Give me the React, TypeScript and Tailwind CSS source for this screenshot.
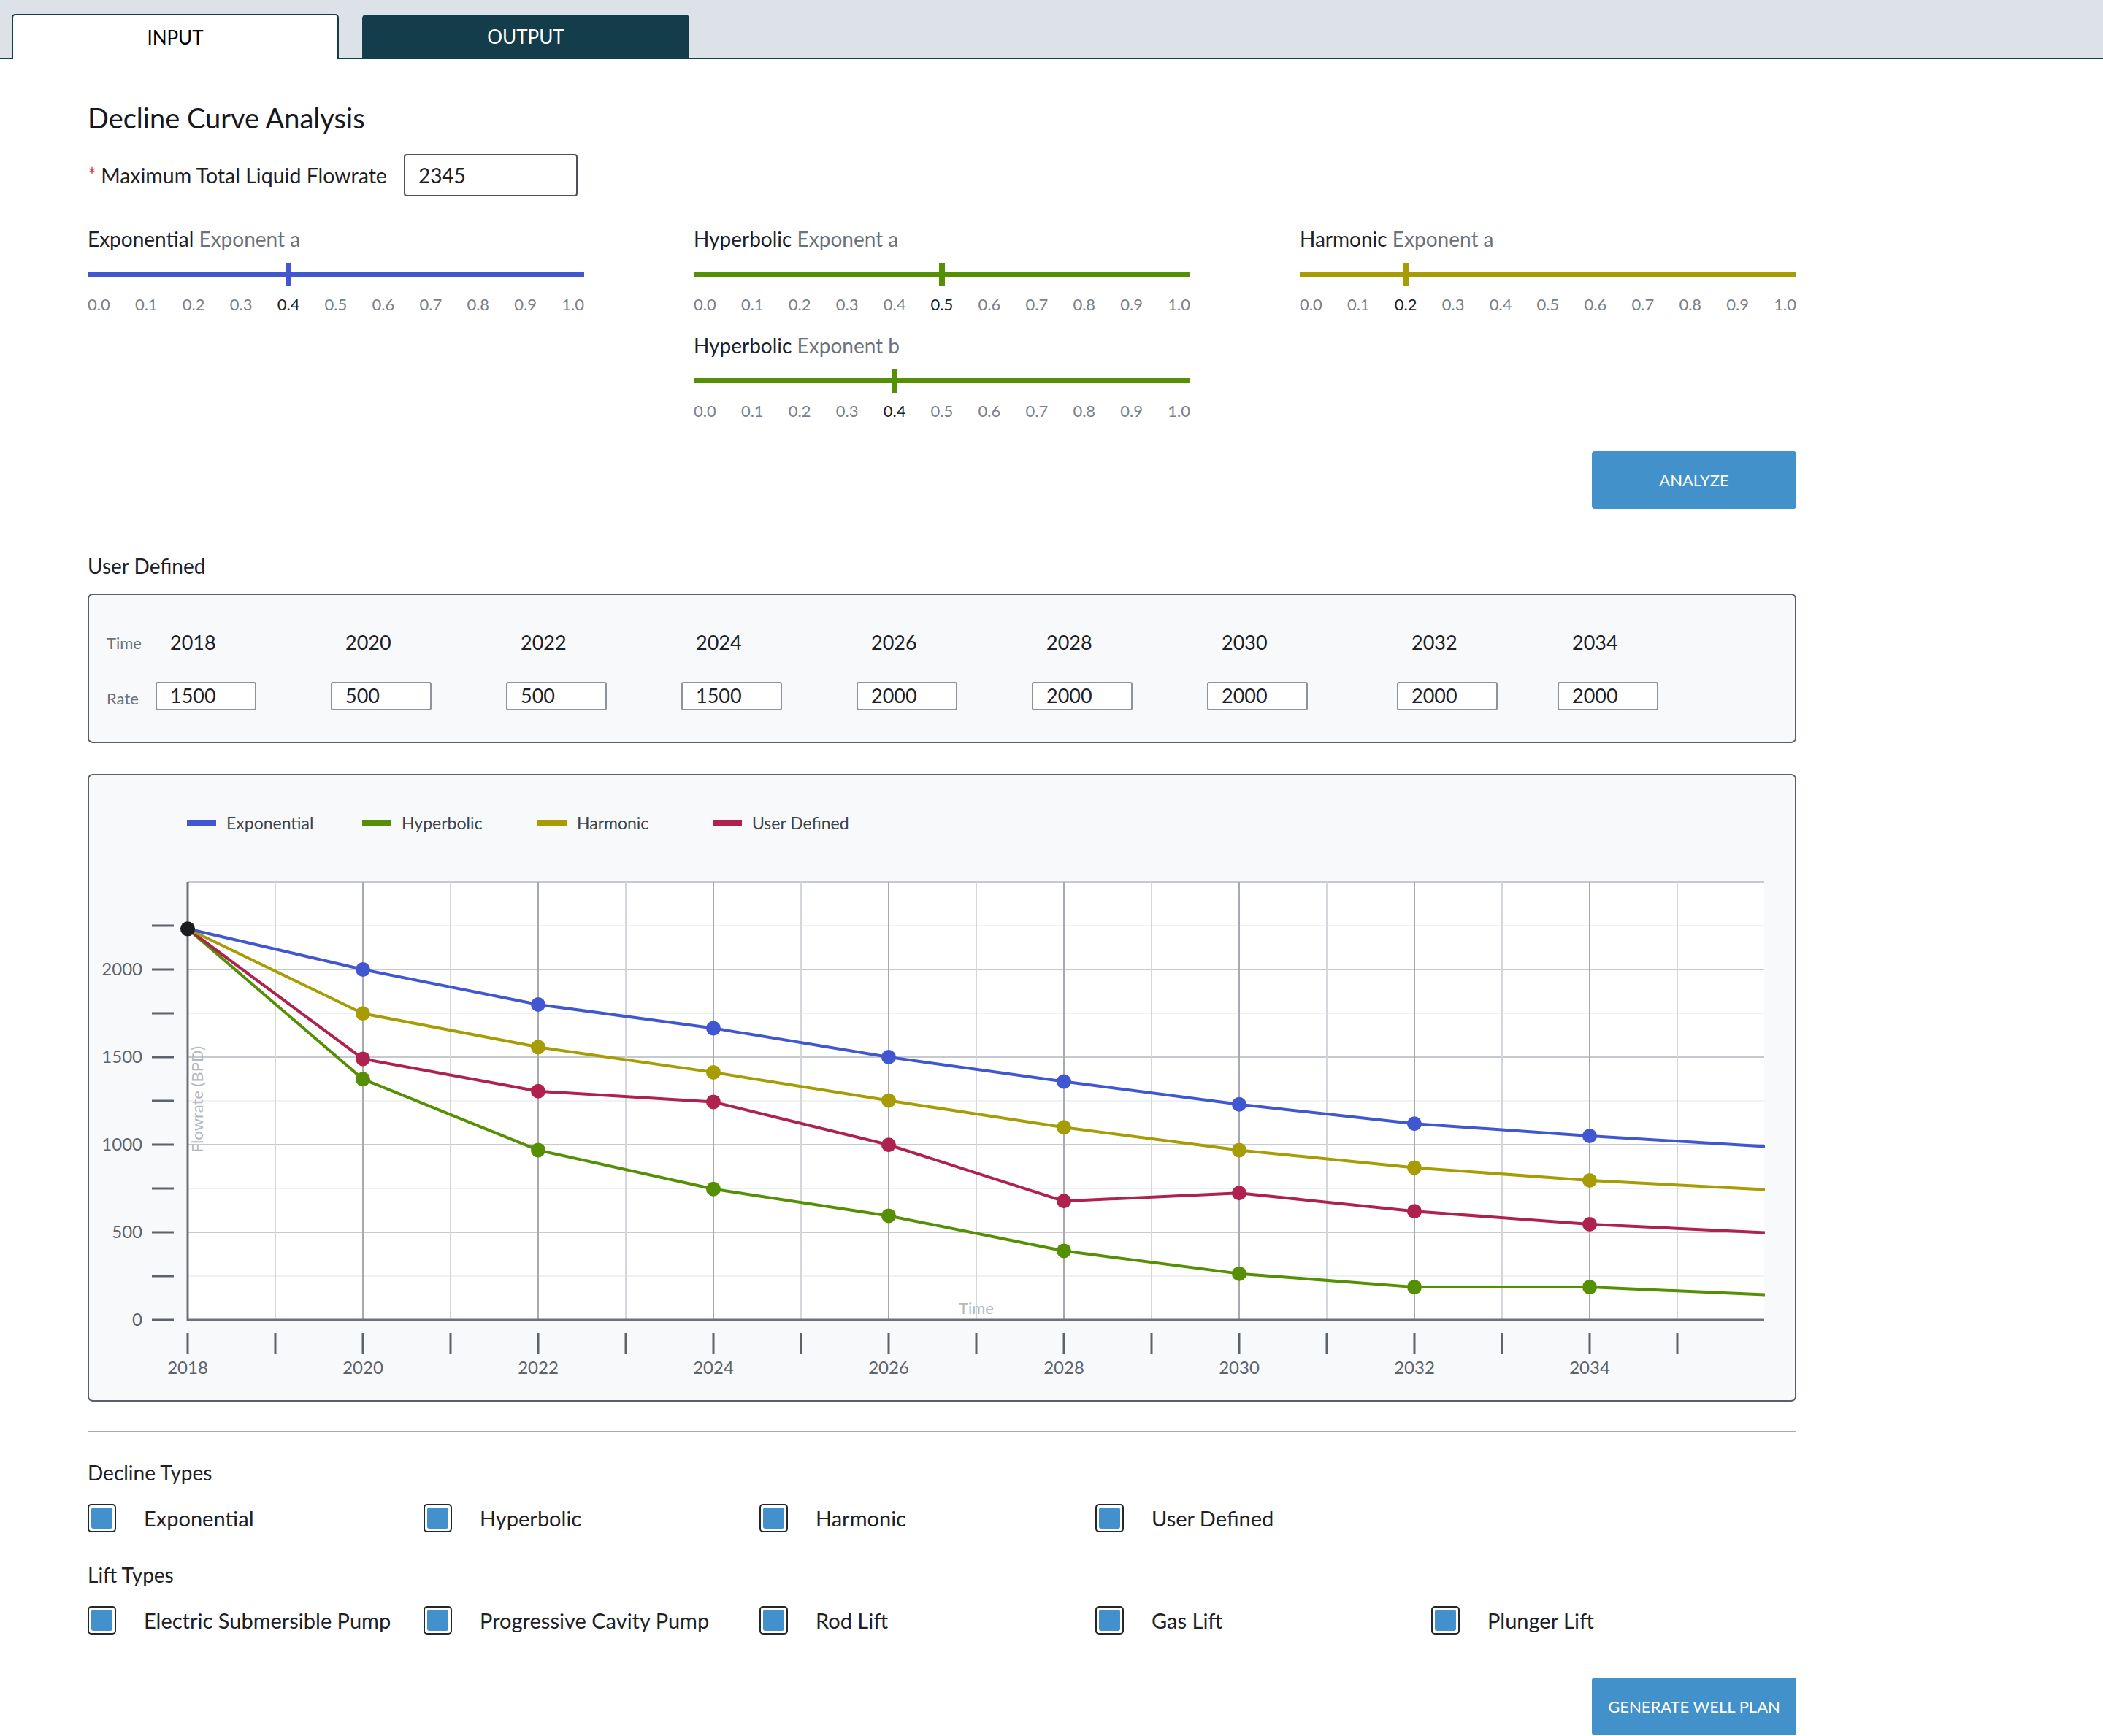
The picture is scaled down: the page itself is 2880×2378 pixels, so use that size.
import React from 'react';

const TICKS = ['0.0', '0.1', '0.2', '0.3', '0.4', '0.5', '0.6', '0.7', '0.8', '0.9', '1.0'];

type SliderProps = {
  name: string;
  param: string;
  value: number;
  barClass: string;
};

const Slider: React.FC<SliderProps> = ({ name, param, value, barClass }) => {
  const active = Math.round(value * 10);
  return (
    <div className="w-[680px]">
      <div className="text-[28px] leading-[34px] text-[#1d2025]">
        {name} <span className="text-[#6b717a]">{param}</span>
      </div>
      <div className="relative mt-[16px] h-[32px] pt-[12px]">
        <div className={`h-[7px] ${barClass}`} />
        <div
          className={`absolute top-0 h-[32px] w-[8px] ${barClass}`}
          style={{ left: 15.5 + value * 649 - 4 }}
        />
      </div>
      <div className="mt-[12px] flex justify-between text-[22px] leading-[26px]">
        {TICKS.map((t, i) => (
          <span key={t} className={i === active ? 'text-[#1d2025]' : 'text-[#7a8089]'}>
            {t}
          </span>
        ))}
      </div>
    </div>
  );
};

const Checkbox: React.FC<{ label: string }> = ({ label }) => (
  <div className="flex w-[460px] items-center">
    <div className="h-[39px] w-[39px] rounded-[5px] border-2 border-[#23272c] bg-white p-[3px]">
      <div className="h-full w-full rounded-[3px] bg-[#4291cc]" />
    </div>
    <span className="ml-[38px] text-[29px] leading-[34px] text-[#1d2025]">{label}</span>
  </div>
);

// chart geometry (svg coords)
const PLOT_L = 135;
const PLOT_R = 2294;
const PLOT_T = 66;
const PLOT_B = 666;
const px = (year: number) => PLOT_L + (year - 2018) * 120;
const py = (v: number) => PLOT_B - v * 0.24;

const START = 2232;
const YEARS = [2020, 2022, 2024, 2026, 2028, 2030, 2032, 2034, 2036];

const SERIES = [
  { key: 'hyp', color: '#558f04', data: [1374, 969, 747, 594, 394, 264, 187, 187, 144] },
  { key: 'usr', color: '#b0224e', data: [1490, 1305, 1244, 999, 678, 724, 620, 546, 498] },
  { key: 'har', color: '#a89c05', data: [1749, 1557, 1413, 1252, 1099, 969, 869, 796, 744] },
  { key: 'exp', color: '#4157d2', data: [2000, 1800, 1665, 1500, 1360, 1230, 1120, 1050, 990] },
];

const LEGEND = [
  { label: 'Exponential', swatch: 'bg-[#4157d2]' },
  { label: 'Hyperbolic', swatch: 'bg-[#558f04]' },
  { label: 'Harmonic', swatch: 'bg-[#a89c05]' },
  { label: 'User Defined', swatch: 'bg-[#b0224e]' },
];

const Chart: React.FC = () => {
  const hVals = [250, 500, 750, 1000, 1250, 1500, 1750, 2000, 2250, 2500];
  const vYears = Array.from({ length: 17 }, (_, i) => 2019 + i);
  const tickYears = Array.from({ length: 18 }, (_, i) => 2018 + i);
  const yTicks = Array.from({ length: 10 }, (_, i) => i * 250);

  return (
    <svg width={2336} height={776} className="block">
      <rect x={PLOT_L} y={PLOT_T} width={PLOT_R - PLOT_L} height={PLOT_B - PLOT_T} fill="#ffffff" />
      {hVals.map((v) => (
        <line
          key={v}
          x1={PLOT_L}
          x2={PLOT_R}
          y1={py(v)}
          y2={py(v)}
          stroke={v % 500 === 0 ? '#c6c9ce' : '#f0f1f3'}
          strokeWidth={2}
        />
      ))}
      {vYears.map((y) => (
        <line
          key={y}
          x1={px(y)}
          x2={px(y)}
          y1={PLOT_T}
          y2={PLOT_B}
          stroke={y % 2 === 0 ? '#a7abb1' : '#d3d6da'}
          strokeWidth={2}
        />
      ))}
      <line x1={PLOT_L} x2={PLOT_L} y1={PLOT_T} y2={PLOT_B + 1} stroke="#6d727a" strokeWidth={3} />
      <line x1={PLOT_L} x2={PLOT_R} y1={PLOT_B} y2={PLOT_B} stroke="#6d727a" strokeWidth={3} />

      {yTicks.map((v) => (
        <line key={v} x1={86} x2={116} y1={py(v)} y2={py(v)} stroke="#5d636b" strokeWidth={3} />
      ))}
      {[0, 500, 1000, 1500, 2000].map((v) => (
        <text
          key={v}
          x={73}
          y={py(v) + 8}
          textAnchor="end"
          fontSize={24}
          fill="#5d636b"
          fontFamily="Lato, sans-serif"
        >
          {v}
        </text>
      ))}
      {tickYears.map((y) => (
        <line key={y} x1={px(y)} x2={px(y)} y1={684} y2={713} stroke="#5d636b" strokeWidth={3} />
      ))}
      {tickYears
        .filter((y) => y % 2 === 0)
        .map((y) => (
          <text
            key={y}
            x={px(y)}
            y={740}
            textAnchor="middle"
            fontSize={24}
            fill="#5d636b"
            fontFamily="Lato, sans-serif"
          >
            {y}
          </text>
        ))}

      <text x={1215} y={658} textAnchor="middle" fontSize={22} fill="#b5b9bf" fontFamily="Lato, sans-serif">
        Time
      </text>
      <text
        x={150}
        y={364}
        textAnchor="middle"
        dominantBaseline="middle"
        fontSize={22}
        fill="#b5b9bf"
        fontFamily="Lato, sans-serif"
        transform="rotate(-90 150 364)"
      >
        Flowrate (BPD)
      </text>

      {SERIES.map((s) => {
        const pts = [[2018, START], ...YEARS.map((y, i) => [y, s.data[i]])]
          .map(([y, v]) => `${px(y)},${py(v)}`)
          .join(' ');
        return (
          <g key={s.key}>
            <polyline points={pts} fill="none" stroke={s.color} strokeWidth={4} strokeLinejoin="round" />
            {YEARS.slice(0, 8).map((y, i) => (
              <circle key={y} cx={px(y)} cy={py(s.data[i])} r={10} fill={s.color} />
            ))}
          </g>
        );
      })}
      <circle cx={px(2018)} cy={py(START)} r={10} fill="#1a1c1f" />
    </svg>
  );
};

const userCols = [
  { year: '2018', rate: '1500', w: 'w-[240px]' },
  { year: '2020', rate: '500', w: 'w-[240px]' },
  { year: '2022', rate: '500', w: 'w-[240px]' },
  { year: '2024', rate: '1500', w: 'w-[240px]' },
  { year: '2026', rate: '2000', w: 'w-[240px]' },
  { year: '2028', rate: '2000', w: 'w-[240px]' },
  { year: '2030', rate: '2000', w: 'w-[260px]' },
  { year: '2032', rate: '2000', w: 'w-[220px]' },
  { year: '2034', rate: '2000', w: 'w-[160px]' },
];

const App: React.FC = () => {
  return (
    <div className="min-h-screen bg-white font-['Lato',sans-serif] text-[#1d2025]">
      {/* Tabs */}
      <div className="flex h-[81px] items-end gap-[32px] border-b-2 border-[#143d4b] bg-[#dde1e8] pl-[16px]">
        <div className="-mb-[2px] flex h-[62px] w-[448px] items-center justify-center rounded-t-[5px] border-2 border-b-0 border-[#143d4b] bg-white text-[26px] text-black">
          INPUT
        </div>
        <div className="-mb-[2px] flex h-[61px] w-[448px] items-center justify-center rounded-t-[5px] bg-[#143d4b] text-[26px] text-white">
          OUTPUT
        </div>
      </div>

      <div className="w-[2460px] pl-[120px] pt-[58px]">
        <h1 className="text-[38px] leading-[44px] text-[#16181c]">Decline Curve Analysis</h1>

        <div className="mt-[28px] flex items-center">
          <span className="text-[28.5px] leading-[34px]">
            <span className="mr-[6px] text-[#e53935]">*</span>Maximum Total Liquid Flowrate
          </span>
          <div className="ml-[23px] flex h-[58px] w-[238px] items-center rounded-[4px] border-2 border-[#4d5259] pl-[18px] text-[28px]">
            2345
          </div>
        </div>

        {/* Sliders */}
        <div className="mt-[41px] grid grid-cols-[680px_680px_680px] gap-x-[150px]">
          <Slider name="Exponential" param="Exponent a" value={0.4} barClass="bg-[#4157d2]" />
          <div className="flex flex-col gap-[26px]">
            <Slider name="Hyperbolic" param="Exponent a" value={0.5} barClass="bg-[#558f04]" />
            <Slider name="Hyperbolic" param="Exponent b" value={0.4} barClass="bg-[#558f04]" />
          </div>
          <Slider name="Harmonic" param="Exponent a" value={0.2} barClass="bg-[#a89c05]" />
        </div>

        <div className="mt-[42px] flex justify-end">
          <button className="h-[79px] w-[280px] rounded-[4px] bg-[#4291ca] text-[22px] text-white">
            ANALYZE
          </button>
        </div>

        {/* User defined */}
        <div className="mt-[62px] text-[28px] leading-[32px]">User Defined</div>
        <div className="mt-[22px] flex h-[205px] rounded-[7px] border-2 border-[#5a5f66] bg-[#f8f9fb] pl-[24px] pt-[45px]">
          <div className="flex w-[67px] flex-col gap-[34px] text-[22px] text-[#6b717a]">
            <div className="flex h-[40px] items-center">Time</div>
            <div className="flex h-[39px] items-center pt-[6px]">Rate</div>
          </div>
          {userCols.map((c) => (
            <div key={c.year} className={`flex flex-col gap-[34px] ${c.w}`}>
              <div className="flex h-[40px] items-center pl-[20px] text-[27px]">{c.year}</div>
              <div className="flex h-[39px] w-[138px] items-center rounded-[3px] border-2 border-[#8e9399] bg-white pl-[18px] text-[27px]">
                {c.rate}
              </div>
            </div>
          ))}
        </div>

        {/* Chart */}
        <div className="mt-[42px] h-[860px] rounded-[7px] border-2 border-[#5a5f66] bg-[#f8f9fb]">
          <div className="flex h-[80px] items-end pl-[134px]">
            <div className="flex h-[30px] items-center">
              {LEGEND.map((l) => (
                <div key={l.label} className="flex w-[240px] items-center">
                  <div className={`h-[9px] w-[40px] ${l.swatch}`} />
                  <span className="ml-[14px] text-[23px] text-[#3d434b]">{l.label}</span>
                </div>
              ))}
            </div>
          </div>
          <Chart />
        </div>

        <div className="mt-[40px] h-[2px] bg-[#a6a9ad]" />

        <div className="mt-[39px] text-[28px] leading-[32px]">Decline Types</div>
        <div className="mt-[27px] flex">
          <Checkbox label="Exponential" />
          <Checkbox label="Hyperbolic" />
          <Checkbox label="Harmonic" />
          <Checkbox label="User Defined" />
        </div>

        <div className="mt-[42px] text-[28px] leading-[32px]">Lift Types</div>
        <div className="mt-[27px] flex">
          <Checkbox label="Electric Submersible Pump" />
          <Checkbox label="Progressive Cavity Pump" />
          <Checkbox label="Rod Lift" />
          <Checkbox label="Gas Lift" />
          <Checkbox label="Plunger Lift" />
        </div>

        <div className="mt-[59px] flex justify-end">
          <button className="h-[79px] w-[280px] rounded-[4px] bg-[#4291ca] text-[22px] text-white">
            GENERATE WELL PLAN
          </button>
        </div>
      </div>
    </div>
  );
};

export default App;
